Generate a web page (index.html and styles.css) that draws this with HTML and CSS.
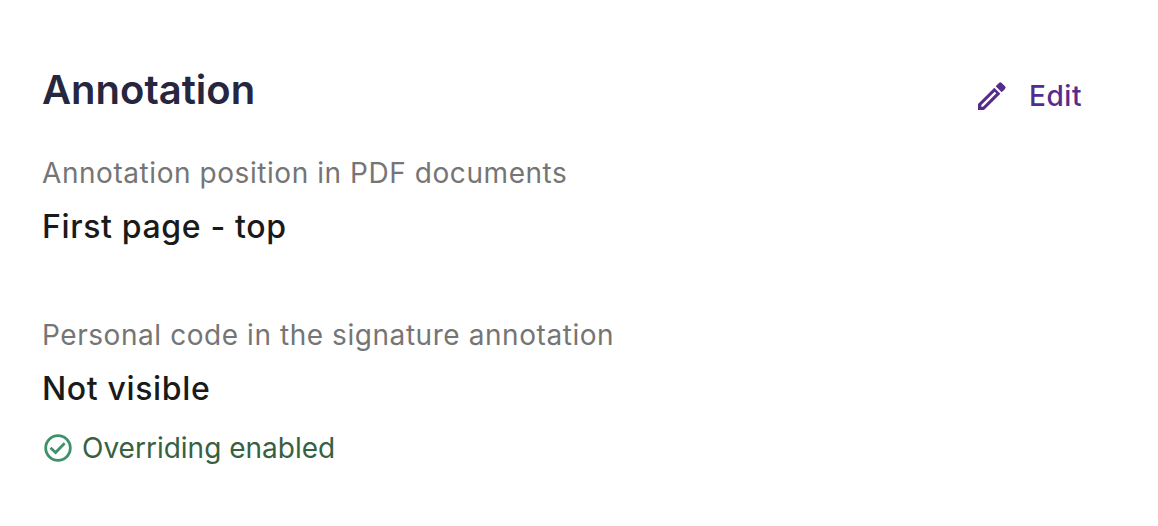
FILE: index.html
```html
<!DOCTYPE html>
<html lang="en">
<head>
<meta charset="utf-8">
<title>Annotation</title>
<link rel="stylesheet" href="styles.css">
</head>
<body>
<main class="card">
  <header class="card-header">
    <h1 class="card-title">Annotation</h1>
    <button class="edit-button" type="button">
      <svg class="edit-icon" viewBox="0 0 108 108" aria-hidden="true"><path fill-rule="evenodd" d="M12 96V78L61 29L79 47L30 96ZM22 86H27L67 46L62 41L22 81ZM65 25L75 15Q79 11 83 15L93 25Q97 29 93 33L83 43Z"/></svg>
      <span>Edit</span>
    </button>
  </header>
  <dl class="fields">
    <div class="field">
      <dt class="field-label">Annotation position in PDF documents</dt>
      <dd class="field-value">First page - top</dd>
    </div>
    <div class="field">
      <dt class="field-label">Personal code in the signature annotation</dt>
      <dd class="field-value">Not visible</dd>
      <dd class="field-status">
        <svg class="status-icon" viewBox="0 0 32 32" aria-hidden="true"><circle cx="16" cy="16" r="12.3"/><path d="M8.5 15.8L13.6 20.5L22.6 11.3"/></svg>
        <span>Overriding enabled</span>
      </dd>
    </div>
  </dl>
</main>
</body>
</html>
```
FILE: styles.css
```css
body {
  margin: 0;
  background: #fff;
  font-family: Inter, "Liberation Sans", sans-serif;
}

.card {
  padding: 64px 76px 56px 42px;
}

.card-header {
  display: flex;
  align-items: flex-end;
  justify-content: space-between;
}

.card-title {
  margin: 0;
  color: #27263f;
  font-size: 40px;
  font-weight: 600;
  line-height: 52px;
}

.edit-button {
  display: flex;
  align-items: center;
  gap: 19px;
  padding: 0;
  border: 0;
  background: none;
  color: #552b8c;
  font-family: inherit;
  font-size: 28px;
  font-weight: 500;
  line-height: 40px;
  letter-spacing: 0.02em;
}

.edit-icon {
  width: 36px;
  height: 36px;
  fill: currentColor;
}

.fields {
  display: flex;
  flex-direction: column;
  gap: 62px;
  margin: 36px 0 0;
}

.field-label {
  color: #757575;
  font-size: 28px;
  line-height: 42px;
  letter-spacing: 0.02em;
}

.field-value {
  margin: 8px 0 0;
  color: #1a1a1a;
  font-size: 32px;
  font-weight: 500;
  line-height: 50px;
  letter-spacing: 0.02em;
}

.field-status {
  display: flex;
  align-items: center;
  gap: 8px;
  margin: 14px 0 0;
  color: #36613f;
  font-size: 28px;
  line-height: 40px;
}

.status-icon {
  width: 32px;
  height: 32px;
  fill: none;
  stroke: #3f9169;
  stroke-width: 2.8;
}
```
